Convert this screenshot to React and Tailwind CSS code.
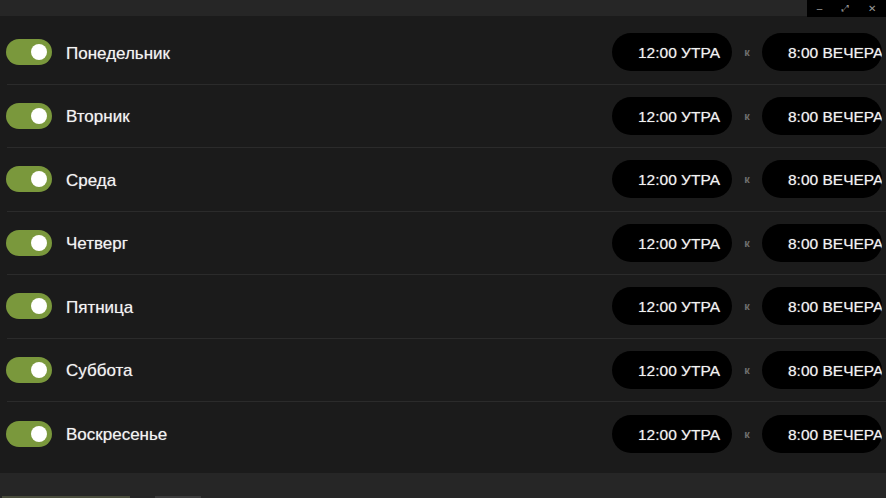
import { useState } from 'react'

const days = ['Понедельник', 'Вторник', 'Среда', 'Четверг', 'Пятница', 'Суббота', 'Воскресенье']

function Toggle({ on, onClick }) {
  return (
    <button
      onClick={onClick}
      className={`flex h-[26px] w-[46px] shrink-0 items-center rounded-full px-[5px] ${on ? 'justify-end bg-[#7a983c]' : 'justify-start bg-[#444]'}`}
    >
      <span className="block h-[16px] w-[16px] rounded-full bg-white" />
    </button>
  )
}

function TimePill({ children }) {
  return (
    <div className="flex h-[38px] w-[120px] shrink-0 items-center overflow-hidden whitespace-nowrap rounded-full bg-black pt-[1px] pl-[26px] text-[15.5px] text-[#f2f2f2] [text-shadow:0_0_1px_rgba(255,255,255,0.5)]">
      {children}
    </div>
  )
}

function DayRow({ name, last }) {
  const [on, setOn] = useState(true)
  return (
    <div className={`ml-[7px] flex h-[63.5px] items-center ${last ? '' : 'border-b border-[#2b2b2b]'}`}>
      <div className="-ml-[1px] flex flex-1 items-center">
        <Toggle on={on} onClick={() => setOn(!on)} />
        <span className="ml-[14px] pt-[2px] text-[17px] text-[#f3f3f3] [text-shadow:0_0_1px_rgba(255,255,255,0.5)]">{name}</span>
      </div>
      <TimePill>12:00 УТРА</TimePill>
      <span className="w-[30px] text-center text-[11px] font-bold text-[#6f6f6f]">к</span>
      <div className="mr-[4px]">
        <TimePill>8:00 ВЕЧЕРА</TimePill>
      </div>
    </div>
  )
}

export default function App() {
  return (
    <div className="flex h-[498px] w-[886px] flex-col overflow-hidden bg-[#1b1b1b] font-['Liberation_Sans',Arial,sans-serif]">
      <div className="flex h-[16px] shrink-0 justify-end bg-[#262626]">
        <div className="flex h-[17px] w-[79px] items-center justify-around bg-black text-[10px] leading-none text-[#9a9a9a]">
          <span>–</span>
          <span className="text-[9px]">⤢</span>
          <span>✕</span>
        </div>
      </div>
      <div className="flex flex-col pt-[5px] pb-[7px]">
        {days.map((d, i) => (
          <DayRow key={d} name={d} last={i === days.length - 1} />
        ))}
      </div>
      <div className="flex flex-1 items-end gap-[25px] bg-[#262626] pl-[2px]">
        <div className="h-[2px] w-[128px] bg-[#4a4d3c]" />
        <div className="h-[2px] w-[46px] bg-[#3c3c3c]" />
      </div>
    </div>
  )
}
